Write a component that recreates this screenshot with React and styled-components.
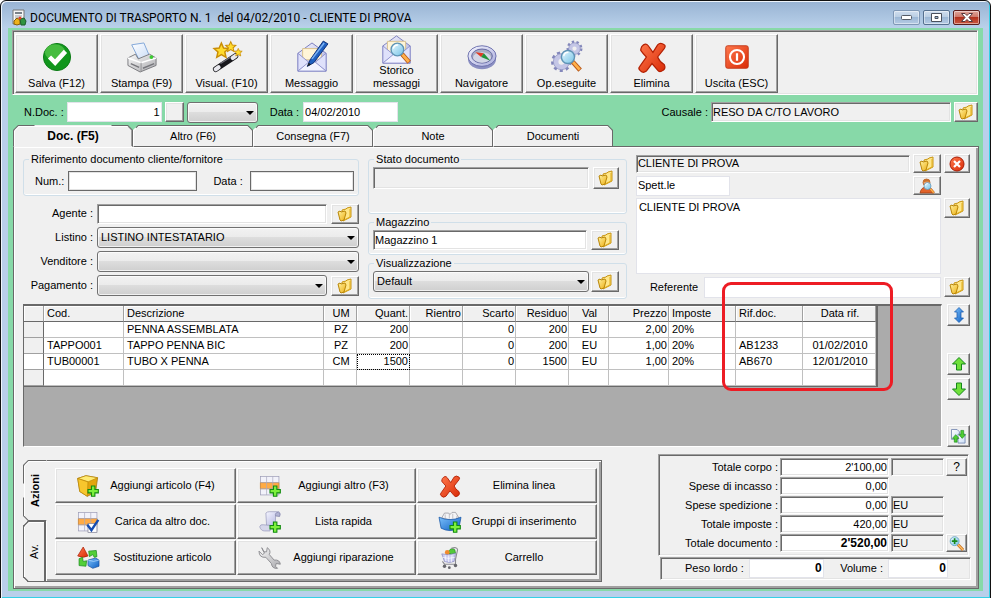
import React, { useId } from "react";
import styled, { createGlobalStyle, css } from "styled-components";

const c = {
  face: "#f0f0f0",
  green: "#87d9a8",
  frame: "#b9cfea",
  dark: "#696969",
  mid: "#a0a0a0",
  light: "#e3e3e3",
};

const GlobalStyle = createGlobalStyle`
  * { box-sizing: border-box; }
  body { margin: 0; background: #fff; color: #000; font: 11px/13px "Liberation Sans", Arial, sans-serif; }
  button, input, select, textarea { font: inherit; color: inherit; margin: 0; border-radius: 0; }
`;

/* ---------- Shared looks ---------- */

const raised = css`
  border: 1px solid;
  border-color: #fff ${c.dark} ${c.dark} #fff;
  box-shadow: inset -1px -1px ${c.mid}, inset 1px 1px ${c.light};
  background: ${c.face};
  padding: 0;
`;

const sunken = css`
  border: 1px solid;
  border-color: ${c.mid} #fff #fff ${c.mid};
  box-shadow: inset 1px 1px ${c.dark}, inset -1px -1px ${c.light};
`;

const fieldLooks = {
  sunken,
  boxed: css`border: 1px solid ${c.dark}; box-shadow: inset 0 0 0 1px ${c.light};`,
  soft: css`border: 1px solid #e2e3ea;`,
};

/* ---------- Window ---------- */

const Window = styled.main`
  display: flex;
  flex-direction: column;
  min-height: 100vh;
  padding: 0 7px 7px;
  border: 1px solid #111;
  border-radius: 6px 6px 0 0;
  background: linear-gradient(#98b3d3, #b9d1ea 27px, ${c.frame} 28px);
  box-shadow: inset 1px 1px #eef4fb, inset -1px -1px #35d0e6;
`;

const TitleBar = styled.header`
  display: flex;
  align-items: center;
  height: 27px;
  padding: 6px 3px 0 4px;
  gap: 4px;
`;

const Title = styled.h1`
  flex: 1;
  margin: 0;
  font: 12px/16px Roboto, "Open Sans", sans-serif;
  white-space: pre;
`;

const CaptionButtons = styled.div`
  display: flex;
  gap: 3px;
`;

const CaptionButton = styled.button`
  display: flex;
  align-items: center;
  justify-content: center;
  width: 27px;
  height: 15px;
  padding: 0;
  border: 1px solid ${(p) => (p.$close ? "#5a1d1d" : p.$quiet ? "#7f97b5" : "#56708f")};
  border-radius: 2px;
  background: ${(p) =>
    p.$close
      ? "linear-gradient(#dfa59b, #cd7668 48%, #b3321f 50%, #c9573f)"
      : "linear-gradient(#d0deee, #b9cde3 48%, #9db8d6 50%, #b5cbe4)"};
  box-shadow: inset 0 0 0 1px rgba(255, 255, 255, 0.45);
`;

const Client = styled.div`
  display: flex;
  flex: 1;
  flex-direction: column;
  padding: 2px 5px 2px 4px;
  background: ${c.green};
`;

/* ---------- Toolbar ---------- */

const Toolbar = styled.nav`
  display: flex;
  gap: 2px;
  height: 65px;
  padding: 3px 2px 2px;
  background: ${c.face};
  ${sunken}
`;

const ToolButton = styled.button`
  ${raised}
  display: flex;
  flex-direction: column;
  align-items: center;
  justify-content: flex-end;
  gap: ${(p) => (p.$tall ? 0 : 5)}px;
  flex: 0 1 83px;
  height: 59px;
  padding-bottom: 2px;
  white-space: pre-line;
`;

const DocRow = styled.div`
  display: flex;
  align-items: center;
  height: 20px;
  margin: 7px 0 3px;
  padding-left: 12px;
`;

const Group = styled.div`
  display: flex;
  align-items: center;
  flex: ${(p) => p.$flex || "none"};
  gap: ${(p) => p.$gap ?? 4}px;
  min-width: 0;
  margin-left: ${(p) => (p.$push ? "auto" : 0)};
  padding-left: ${(p) => p.$indent || 0}px;
`;

const Label = styled.label`
  white-space: nowrap;
  text-align: ${(p) => (p.$right ? "right" : "left")};
`;

const Input = styled.input`
  ${(p) => fieldLooks[p.$look || "sunken"]}
  flex: ${(p) => (p.$w ? `0 1 ${p.$w}px` : "1 1 0")};
  width: ${(p) => (p.$w ? `${p.$w}px` : "100%")};
  min-width: 0;
  height: ${(p) => p.$h || 20}px;
  padding: 0 1px 1px;
  background: ${(p) => (p.readOnly ? c.face : "#fff")};
  text-align: ${(p) => (p.$right ? "right" : "left")};
  font-weight: ${(p) => (p.$bold ? 700 : 400)};
  font-size: ${(p) => (p.$bold ? 12 : 11)}px;
`;

const SelectBox = styled.span`
  position: relative;
  display: flex;
  flex: ${(p) => (p.$w ? `0 1 ${p.$w}px` : "1 1 0")};
  width: ${(p) => (p.$w ? `${p.$w}px` : "auto")};
  min-width: 0;
  &::after {
    content: "";
    position: absolute;
    right: 4px;
    top: 9px;
    border: 4px solid transparent;
    border-top-color: #000;
    border-bottom: 0;
    pointer-events: none;
  }
`;

const NativeSelect = styled.select`
  appearance: none;
  width: 100%;
  height: 21px;
  padding: 0 16px 0 3px;
  border: 1px solid #707070;
  border-radius: 3px;
  background: linear-gradient(#f2f2f2, #ebebeb 49%, #dddddd 50%, #cfcfcf);
  box-shadow: inset 0 0 0 1px rgba(255, 255, 255, 0.7);
`;

const SmallButton = styled.button`
  ${raised}
  display: flex;
  flex: none;
  align-items: center;
  justify-content: center;
  width: ${(p) => p.$w || 28}px;
  height: ${(p) => p.$h || 20}px;
  font-size: 12px;
`;

/* ---------- Tabs and page ---------- */

const Tabs = styled.div`
  display: flex;
  margin: 0 1px -1px;
`;

const Tab = styled.button`
  flex: 0 1 120px;
  height: 22px;
  padding: 0;
  border: 1px solid ${c.dark};
  border-left-color: ${(p) => (p.$active ? c.dark : "#fff")};
  border-bottom-color: ${(p) => (p.$active ? c.face : c.dark)};
  border-radius: 5px 5px 0 0;
  corner-shape: bevel;
  background: ${c.face};
  box-shadow: ${(p) => (p.$active ? `inset 1px 1px #fff, inset -1px 0 ${c.mid}` : "inset 0 1px #fff")};
  font-size: ${(p) => (p.$active ? 12 : 11)}px;
  font-weight: ${(p) => (p.$active ? 700 : 400)};
  z-index: ${(p) => (p.$active ? 1 : 0)};
`;

const Page = styled.section`
  display: flex;
  flex: 1;
  flex-direction: column;
  margin: 0 -1px 0 1px;
  padding: 6px 6px 6px 9px;
  border: 1px solid ${c.dark};
  background: ${c.face};
  box-shadow: inset 1px 1px #fff, inset -2px -2px ${c.mid};
`;

const FormGrid = styled.div`
  display: grid;
  grid-template-columns: 335fr 258fr 333fr;
  column-gap: 9px;
  padding: 0 2px 0 0;
`;

const Column = styled.div`
  display: flex;
  flex-direction: column;
  gap: ${(p) => p.$gap || 2}px;
  min-width: 0;
`;

const Fieldset = styled.fieldset`
  display: flex;
  align-items: flex-start;
  gap: ${(p) => p.$gap || 4}px;
  min-width: 0;
  height: ${(p) => p.$h}px;
  margin: 0;
  padding: ${(p) => p.$top || 1}px ${(p) => p.$side || 7}px 0 4px;
  border: 1px solid #d0dfe9;
  border-radius: 3px;
  box-shadow: inset 0 -1px #fff;
`;

const Legend = styled.legend`
  height: 13px;
  margin-left: 1px;
  padding: 0 2px;
`;

const FieldRows = styled.div`
  display: grid;
  grid-template-columns: 70px 1fr;
  grid-auto-rows: 21px;
  align-items: center;
  gap: 3px 4px;
  margin-top: 5px;
`;

const AddressGrid = styled.div`
  display: grid;
  grid-template-columns: minmax(0, 1fr) 26px;
  grid-template-rows: 19px 19px 76px 21px;
  gap: 3px;
  padding-top: 1px;
`;

const AddressArea = styled.textarea`
  ${fieldLooks.soft}
  resize: none;
  width: 100%;
  height: 76px;
  padding: 2px;
  background: #fff;
`;

/* ---------- Document lines ---------- */

const Lines = styled.div`
  display: flex;
  flex: 1;
  gap: 5px;
  min-height: 143px;
  margin: 5px 2px 0 0;
`;

const TableArea = styled.div`
  position: relative;
  flex: 1;
  min-width: 0;
  background: #ababab;
  border: 1px solid;
  border-color: ${c.dark} #fff #fff ${c.dark};
  border-top-width: 2px;
`;

const Table = styled.table`
  table-layout: fixed;
  width: 854px;
  border-collapse: separate;
  border-spacing: 0;
  border-right: 2px solid ${c.dark};
  border-bottom: 1px solid ${c.dark};
`;

const Cell = styled.td`
  height: 16px;
  padding: 0 1px 0 3px;
  border-right: 1px solid #c0c0c0;
  border-bottom: 1px solid #c0c0c0;
  background: #fff;
  line-height: 13px;
  white-space: nowrap;
  text-align: ${(p) => p.$align || "left"};
  ${(p) => p.$focused && "outline: 1px dotted #000; outline-offset: -1px;"}
`;

const HeadCell = styled(Cell).attrs({ as: "th", scope: "col" })`
  font-weight: 400;
  background: ${c.face};
  border-right-color: ${c.mid};
  border-bottom-color: ${c.dark};
  box-shadow: inset 1px 1px #fff;
`;

const RowHead = styled(Cell)`
  background: ${(p) => (p.$current ? "#fff" : c.face)};
  border-right-color: ${c.dark};
  border-bottom-color: ${c.mid};
`;

const Highlight = styled.div`
  position: absolute;
  top: -24px;
  left: 698px;
  width: 171px;
  height: 109px;
  border: 3px solid #ed1c24;
  border-radius: 9px;
  pointer-events: none;
`;

const SideButtons = styled.div`
  display: flex;
  flex-direction: column;
  gap: 3px;
  & > :nth-child(2) { margin-top: 24px; }
  & > :last-child { margin-top: auto; }
`;

/* ---------- Bottom area ---------- */

const Bottom = styled.div`
  display: flex;
  justify-content: space-between;
  gap: 20px;
  margin-top: 7px;
`;

const Actions = styled.div`
  display: flex;
  flex: 0 1 579px;
  margin-top: 6px;
`;

const SideTabs = styled.div`
  display: flex;
  flex-direction: column;
  width: 23px;
  margin-right: -1px;
`;

const SideTab = styled.button`
  flex: 1;
  width: ${(p) => (p.$active ? 24 : 22)}px;
  padding: 0;
  writing-mode: vertical-rl;
  transform: rotate(180deg);
  border: 1px solid ${c.dark};
  border-left: ${(p) => (p.$active ? `1px solid ${c.face}` : `1px solid ${c.dark}`)};
  border-radius: 0 5px 5px 0;
  corner-shape: bevel;
  background: ${c.face};
  box-shadow: inset -1px -1px #fff;
  font-weight: ${(p) => (p.$active ? 700 : 400)};
  z-index: ${(p) => (p.$active ? 1 : 0)};
`;

const ActionGrid = styled.div`
  display: grid;
  flex: 1;
  grid-template-columns: 181fr 179fr 180fr;
  grid-auto-rows: 35px;
  gap: 1px;
  padding: 7px 4px 6px 9px;
  border: 1px solid ${c.dark};
  box-shadow: inset 0 1px #fff, inset 1px 0 #fff, inset -2px -2px ${c.mid};
`;

const ActionButton = styled.button`
  ${raised}
  display: flex;
  align-items: center;
  padding: 0 9px 0 21px;
  span { flex: 1; }
`;

const Summary = styled.div`
  display: flex;
  flex-direction: column;
  gap: 1px;
  flex: 0 1 311px;
  margin-right: 3px;
`;

const Totals = styled.div`
  ${sunken}
  display: grid;
  grid-template-columns: 1fr 109px 53px 22px;
  grid-auto-rows: 18px;
  align-items: center;
  gap: 1px 2px;
  padding: 3px 0 3px 2px;
  height: 102px;
`;

const Weights = styled.div`
  ${sunken}
  display: flex;
  align-items: center;
  gap: 5px;
  height: 23px;
  margin: 0 -2px 0 2px;
  padding: 0 22px 0 24px;
`;

const VolumeLabel = styled(Label)`
  margin-left: auto;
`;

/* ---------- Icons ---------- */

const Svg = styled.svg`
  display: block;
  flex: none;
  overflow: visible;
`;

const Icon = ({ size = 30, children }) => (
  <Svg width={size} height={size} viewBox="0 0 32 32" aria-hidden="true">{children}</Svg>
);

const Gradients = () => (
  <Svg width="0" height="0" aria-hidden="true">
    <defs>
      {[
        ["gGreen", "#7be36a", "#0a8a16"],
        ["gRed", "#ff7a4e", "#d92a06"],
        ["gYellow", "#fff2a0", "#edae12"],
        ["gLilac", "#f6f6ff", "#a9acdc"],
        ["gBlue", "#7cc0fa", "#0d5fc4"],
        ["gLens", "#eafaff", "#74c2e6"],
        ["gGrey", "#fafafa", "#a8a8ac"],
        ["gPale", "#ffffff", "#c9dcf7"],
      ].map(([id, a, b]) => (
        <linearGradient id={id} key={id} x1="0" y1="0" x2="1" y2="1">
          <stop offset="0" stopColor={a} />
          <stop offset="1" stopColor={b} />
        </linearGradient>
      ))}
    </defs>
  </Svg>
);

const Plus = () => (
  <path d="M21 16h5v5h5v5h-5v5h-5v-5h-5v-5h5z" fill="#7df03c" stroke="#128a10" strokeWidth="1.6" />
);

const Lens = () => (
  <g>
    <path d="M22 21l8 9" stroke="#b9591a" strokeWidth="5" />
    <path d="M22.500 21.500l7 8" stroke="#ffb04a" strokeWidth="3" />
    <circle cx="17" cy="16" r="7" fill="url(#gLens)" stroke="#5e93b5" strokeWidth="1.500" />
    <path d="M12.500 15a5 5 0 0 1 5-4" stroke="#fff" strokeWidth="1.500" fill="none" />
  </g>
);

const SaveIcon = () => (
  <Icon>
    <circle cx="16" cy="16" r="14.500" fill="#11961d" stroke="#0b7a14" />
    <ellipse cx="14" cy="11" rx="11" ry="8.500" fill="#5ccc50" opacity="0.7" />
    <path d="M8 16l6 6L25 10" fill="none" stroke="#fff" strokeWidth="4.800" />
  </Icon>
);

const PrinterIcon = () => (
  <Icon>
    <path d="M5 3l13-2 6 14-11 4z" fill="url(#gPale)" stroke="#7ea4d8" />
    <path d="M1 17l8-4 3 5 12-5 7 4v8l-17 7L1 25z" fill="url(#gGrey)" stroke="#77777c" />
    <path d="M1 17l14 5 16-5" fill="none" stroke="#fff" strokeWidth="1.600" />
    <path d="M15 22v9" stroke="#8e8e92" />
    <path d="M4 23l9 4M17 28l12-5" stroke="#77777c" strokeWidth="1.500" />
    <circle cx="26" cy="16" r="2" fill="#3ccd32" />
  </Icon>
);

const STAR = "M0-6l1.800 4 4.200.4-3.200 2.900 1 4.300L0 3.400-3.800 5.600l1-4.300L-6-1.600l4.200-.4z";

const WandIcon = () => (
  <Icon>
    <path d="M4 29L25 15" stroke="#17171b" strokeWidth="6" strokeLinecap="round" />
    <path d="M4 29l3-2M22 17l3-2" stroke="#e8e8ee" strokeWidth="4.500" strokeLinecap="round" />
    <path d="M9 23l11-7" stroke="#73737c" strokeWidth="1.300" />
    {[[10, 9, 1.3], [20, 5, 0.9], [28, 11, 0.7]].map(([x, y, s]) => (
      <path key={x} d={STAR} transform={`translate(${x} ${y}) scale(${s})`} fill="#ffdc2e" stroke="#c98d06" strokeWidth="1.200" />
    ))}
  </Icon>
);

const Envelope = () => (
  <g>
    <path d="M1 12L16 1l15 11v19H1z" fill="url(#gLilac)" stroke="#7478bb" />
    <path d="M6 7h20v12H6z" fill="#fff5d8" stroke="#d7c08c" />
    <path d="M1 12l12 10L1 31zM31 12L19 22l12 9z" fill="#dfe1fb" stroke="#8d90cc" />
    <path d="M1 31l12-10q3-2 6 0l12 10z" fill="#f2f3ff" stroke="#8d90cc" />
  </g>
);

const MessageIcon = () => (
  <Icon>
    <Envelope />
    <path d="M11 26l3-7L28-1l5 3-15 20z" fill="#1f60c0" stroke="#0f2f75" />
    <path d="M16 18L29 1" stroke="#7db2f2" strokeWidth="1.600" />
    <path d="M11 26l1.500-4 2.500 2z" fill="#222" />
  </Icon>
);

const HistoryIcon = () => (
  <Icon size={29}>
    <Envelope />
    <Lens />
  </Icon>
);

const CompassIcon = () => (
  <Icon>
    <ellipse cx="16" cy="18" rx="15" ry="11" fill="#8b8fc2" />
    <ellipse cx="16" cy="15" rx="15" ry="11" fill="url(#gLilac)" stroke="#696dab" />
    <ellipse cx="16" cy="15" rx="11" ry="7.500" fill="#a9adc4" stroke="#5f639f" />
    <ellipse cx="16" cy="16.500" rx="9.500" ry="5.500" fill="#d3d6e6" />
    <path d="M9 11l9 1-3 4z" fill="#e33a22" />
    <path d="M25 20l-10-4 3-4z" fill="#23933a" />
  </Icon>
);

const Gear = ({ x, y, r }) => (
  <g transform={`translate(${x} ${y})`}>
    <circle r={r} fill="none" stroke="#8286ba" strokeWidth="4" strokeDasharray={`${(r * Math.PI) / 9} ${(r * Math.PI) / 9}`} />
    <circle r={r * 0.65} fill="none" stroke="#c4c6e6" strokeWidth={r * 0.6} />
    <circle r={r * 0.95} fill="none" stroke="#9195c4" strokeWidth="0.800" />
  </g>
);

const GearsIcon = () => (
  <Icon>
    <Gear x={24} y={7} r={6.5} />
    <Gear x={10} y={21} r={9} />
    <Lens />
  </Icon>
);

const CrossIcon = ({ size }) => (
  <Icon size={size}>
    <path
      d="M5 5q4-5 7-1l5 7 5-8q3-3 7 0 2 1 0 4l-7 9q2 5 7 8 2 4-1 6-4 3-6 0l-6-7-6 8q-4 3-7-1-2-2 0-4l7-10q-4-4-6-7 0-2 1-4z"
      fill="url(#gRed)"
      stroke="#b32003"
      strokeWidth="1.300"
    />
  </Icon>
);

const PowerIcon = () => (
  <Icon>
    <rect x="4" y="4" width="24" height="24" rx="2" fill="url(#gRed)" stroke="#c23a1a" />
    <circle cx="16" cy="16" r="7.500" fill="none" stroke="#fff" strokeWidth="2.200" />
    <path d="M16 12v8" stroke="#fff" strokeWidth="2.400" />
  </Icon>
);

const FolderIcon = () => (
  <Svg width="16" height="16" viewBox="0 0 16 16" aria-hidden="true">
    <path d="M5 4l4-1 1-1 4-1v10l-8 4z" fill="#ffe78a" stroke="#c79412" />
    <path d="M13 3v8l-6 3" fill="none" stroke="#e0ac1c" />
    <path d="M1 6l2-1 1 1 4-1 1 2-2 7-3 1-1-1z" fill="url(#gYellow)" stroke="#b98608" />
  </Svg>
);

const RemoveIcon = () => (
  <Icon size={16}>
    <circle cx="16" cy="16" r="14" fill="url(#gRed)" stroke="#a81c05" strokeWidth="2" />
    <path d="M10 10l12 12M22 10L10 22" stroke="#fff" strokeWidth="4.500" />
  </Icon>
);

const PersonIcon = () => (
  <Icon size={16}>
    <path d="M2 30q2-12 13-12t14 12z" fill="#e2622a" stroke="#9c3c10" strokeWidth="1.500" />
    <circle cx="15" cy="9" r="7" fill="#f4a56b" stroke="#a75624" strokeWidth="1.500" />
    <path d="M8 9q0-8 8-7 6 0 6 6-6-2-14 1z" fill="#c8702c" />
    <Lens />
  </Icon>
);

const ArrowIcon = ({ kind }) => (
  <Icon size={16}>
    {kind === "both" && <path d="M16 1l9 9h-5v12h5l-9 9-9-9h5V10H7z" fill="url(#gBlue)" stroke="#1659ad" strokeWidth="1.500" />}
    {kind === "up" && <path d="M16 3l13 13h-8v12H11V16H3z" fill="#6fe03a" stroke="#14861a" strokeWidth="2" />}
    {kind === "down" && <path d="M16 29L3 16h8V4h10v12h8z" fill="#6fe03a" stroke="#14861a" strokeWidth="2" />}
  </Icon>
);

const SwapIcon = () => (
  <Icon size={15}>
    <path d="M1 1h12l5 5v16H1z" fill="url(#gPale)" stroke="#7185b0" strokeWidth="1.800" />
    <path d="M15 11h15v19H15z" fill="url(#gPale)" stroke="#7185b0" strokeWidth="1.800" />
    <path d="M10 12l7 8h-4v8H7v-8H3zM24 20l-7-8h4V3h6v9h4z" fill="#4fcf31" stroke="#14861a" strokeWidth="1.300" />
  </Icon>
);

const BoxIcon = () => (
  <Icon size={22}>
    <path d="M1 5L13 1l17 3-3 21-12 6L4 24z" fill="#e2a50e" stroke="#9c6d04" />
    <path d="M1 5l15 5 14-6-17-3z" fill="#ffeb74" stroke="#b98608" />
    <path d="M16 10l-1 21L4 24 1 5z" fill="#f7c62d" stroke="#b98608" />
    <Plus />
  </Icon>
);

const SheetGrid = () => (
  <g>
    <rect x="2" y="2" width="27" height="27" fill="#f2f2fa" stroke="#9a9ab4" />
    <path d="M2 11h27v9H2z" fill="#ffab45" stroke="#c8812e" />
    <path d="M2 11h27M2 20h27M11 2v27M20 2v27" stroke="#aaaabf" fill="none" />
  </g>
);

const SheetAddIcon = () => (
  <Icon size={22}><SheetGrid /><Plus /></Icon>
);

const SheetCheckIcon = () => (
  <Icon size={22}>
    <SheetGrid />
    <rect x="16" y="18" width="13" height="13" fill="#fff" stroke="#7c7c90" />
    <path d="M15 20l6 8 10-15" fill="none" stroke="#154cb0" strokeWidth="3.500" />
  </Icon>
);

const ScrollIcon = () => (
  <Icon size={22}>
    <path d="M10 3q2-2 5-2h14q3 2 1 6h-6v15H11z" fill="url(#gLilac)" stroke="#9698ba" />
    <path d="M24 7q-1-5 4-5 4 2 2 6z" fill="#b2b4d4" stroke="#8082a8" />
    <path d="M1 23q1-4 5-3l12 1-2 8H8q-5 0-7-6z" fill="#d5d6ea" stroke="#9698ba" />
    <Plus />
  </Icon>
);

const ShapesIcon = () => (
  <Icon size={22}>
    <path d="M9 0l7 13q-7 4-15 0z" fill="url(#gRed)" stroke="#a81c05" />
    <path d="M16 19l11-3 5 3v9l-9 3-7-4z" fill="url(#gBlue)" stroke="#194d9a" />
    <path d="M16 19l8 2 8-2" fill="none" stroke="#b8dcff" />
    <path d="M3 17l5-2 1 6 5-1-1 8-10-1zM17 6l11-1 1 9-4 1-2-4-5 3z" fill="#53cf38" stroke="#14861a" />
  </Icon>
);

const WrenchIcon = () => (
  <Icon size={22}>
    <path
      d="M4 1l3 6 4 0 1-6q6 4 3 10l7 8q8-1 9 6l-6-1-1 4 3 3q-8 1-9-7l-8-9Q0 16 0 6l5 5 3-2z"
      fill="url(#gGrey)"
      stroke="#88888c"
      strokeWidth="1.300"
    />
  </Icon>
);

const BasketIcon = () => (
  <Icon size={22}>
    <path d="M4 10l4-7h6l2 2 3-3h5l5 8-10 4z" fill="#f4f4f6" stroke="#8d8d94" />
    <path d="M9 5v6M15 4v7M20 4v7M26 7v5" stroke="#a9a9b0" />
    <path d="M0 9q16 7 32 0l-3 16q-13 7-26 0z" fill="url(#gBlue)" stroke="#0c4da2" />
    <Plus />
  </Icon>
);

const CartIcon = () => (
  <Icon size={22}>
    <path d="M14 6q4-6 9-2l1 5q-6 3-11 0z" fill="#52c93a" stroke="#1d8a1c" />
    <circle cx="12" cy="8" r="3.500" fill="#f18a2e" />
    <path d="M4 10q10 3 20-1l-2 12q-7 3-14 0z" fill="#cccdf2" stroke="#8183ba" />
    <path d="M9 12l1 9M14 12v10M19 11l-1 11M5 15q9 3 18 0" stroke="#fff" fill="none" />
    <path d="M18 2q8-3 9 2l-3 14v7H8l-3-4" fill="none" stroke="#8a8a90" strokeWidth="1.600" />
    <circle cx="8" cy="28" r="2.500" fill="#66666c" />
    <circle cx="15" cy="30" r="2" fill="#66666c" />
    <circle cx="24" cy="27" r="2.500" fill="#66666c" />
  </Icon>
);

const ZoomIcon = () => (
  <Icon size={15}>
    <path d="M19 18l11 12" stroke="#c46b1c" strokeWidth="6" />
    <path d="M19 18l11 12" stroke="#ffbd62" strokeWidth="3" />
    <circle cx="12" cy="11" r="9.500" fill="url(#gLens)" stroke="#6aa6c8" strokeWidth="2" />
    <path d="M12 5v12M6 11h12" stroke="#168a1c" strokeWidth="3.500" />
  </Icon>
);

const DocumentIcon = () => (
  <Svg width="14" height="17" viewBox="0 0 14 17" aria-hidden="true">
    <path d="M1 1h11v14H1z" fill="#f6f6f6" stroke="#777" />
    <path d="M3 3h7v2H3z" fill="#7b8288" />
    <path d="M3 7h7M3 9h5" stroke="#9aa0a6" />
    <path d="M2 12l3-3 3 2v4l-3 1-3-1z" fill="#efb21a" stroke="#8a5e06" />
    <path d="M8 10l4-1 2 3-1 4H9z" fill="#2e9440" stroke="#1b5f28" />
    <circle cx="8" cy="9" r="1.500" fill="#e0402a" />
  </Svg>
);

/* ---------- Small composites ---------- */

const Select = ({ id, value = "", w, label }) => (
  <SelectBox $w={w}>
    <NativeSelect id={id} defaultValue={value} aria-label={label}>
      <option value={value}>{value}</option>
    </NativeSelect>
  </SelectBox>
);

const FolderButton = ({ label, w, h }) => (
  <SmallButton type="button" $w={w} $h={h} aria-label={label}><FolderIcon /></SmallButton>
);

const TotalRow = ({ label, value, unit, bold, children }) => {
  const id = useId();
  return (
    <>
      <Label htmlFor={id} $right>{label}</Label>
      <Input id={id} defaultValue={value} $right $bold={bold} $h={18} />
      {unit === undefined ? <span /> : <Input aria-label={`${label} valuta`} defaultValue={unit} readOnly $h={18} />}
      {children || <span />}
    </>
  );
};

/* ---------- Data ---------- */

const tools = [
  ["Salva (F12)", SaveIcon],
  ["Stampa (F9)", PrinterIcon],
  ["Visual. (F10)", WandIcon],
  ["Messaggio", MessageIcon],
  ["Storico\nmessaggi", HistoryIcon],
  ["Navigatore", CompassIcon],
  ["Op.eseguite", GearsIcon],
  ["Elimina", CrossIcon],
  ["Uscita (ESC)", PowerIcon],
];

const tabs = ["Doc. (F5)", "Altro (F6)", "Consegna (F7)", "Note", "Documenti"];

const columns = [
  ["Cod.", 80],
  ["Descrizione", 200],
  ["UM", 33, "center"],
  ["Quant.", 53, "right"],
  ["Rientro", 53, "right"],
  ["Scarto", 53, "right"],
  ["Residuo", 53, "right"],
  ["Val", 40, "center"],
  ["Prezzo", 60, "right"],
  ["Imposte", 67],
  ["Rif.doc.", 67],
  ["Data rif.", 73, "center"],
];

const rows = [
  ["", "PENNA ASSEMBLATA", "PZ", "200", "", "0", "200", "EU", "2,00", "20%", "", ""],
  ["TAPPO001", "TAPPO PENNA BIC", "PZ", "200", "", "0", "200", "EU", "1,00", "20%", "AB1233", "01/02/2010"],
  ["TUB00001", "TUBO X PENNA", "CM", "1500", "", "0", "1500", "EU", "1,00", "20%", "AB670", "12/01/2010"],
  Array(12).fill(""),
];

const actions = [
  ["Aggiungi articolo (F4)", BoxIcon],
  ["Aggiungi altro (F3)", SheetAddIcon],
  ["Elimina linea", () => <CrossIcon size={22} />],
  ["Carica da altro doc.", SheetCheckIcon],
  ["Lista rapida", ScrollIcon],
  ["Gruppi di inserimento", BasketIcon],
  ["Sostituzione articolo", ShapesIcon],
  ["Aggiungi riparazione", WrenchIcon],
  ["Carrello", CartIcon],
];

export default function App() {
  return (
    <Window>
      <GlobalStyle />
      <Gradients />
      <TitleBar>
        <DocumentIcon />
        <Title>{"DOCUMENTO DI TRASPORTO N. 1  del 04/02/2010 - CLIENTE DI PROVA"}</Title>
        <CaptionButtons>
          <CaptionButton type="button" $quiet aria-label="Riduci a icona">
            <Svg width="11" height="5"><rect x="0.500" y="0.500" width="10" height="4" rx="1" fill="#fff" stroke="#555b66" /></Svg>
          </CaptionButton>
          <CaptionButton type="button" aria-label="Ingrandisci">
            <Svg width="11" height="9">
              <path d="M.5.5h10v8H.5zM4 3.500h3v2H4z" fill="#fff" fillRule="evenodd" stroke="#4a505c" />
            </Svg>
          </CaptionButton>
          <CaptionButton type="button" $close aria-label="Chiudi">
            <Svg width="12" height="9">
              <path d="M.5.5h3.500l2 2 2-2h3.500L8 4.500l3.500 4H8l-2-2-2 2H.5L4 4.500z" fill="#fff" stroke="#55383c" />
            </Svg>
          </CaptionButton>
        </CaptionButtons>
      </TitleBar>

      <Client>
        <Toolbar>
          {tools.map(([label, Glyph]) => (
            <ToolButton type="button" key={label} $tall={label.includes("\n")}>
              <Glyph />
              <span>{label}</span>
            </ToolButton>
          ))}
        </Toolbar>

        <DocRow>
          <Group $gap={3}>
            <Label htmlFor="ndoc">N.Doc. :</Label>
            <Input id="ndoc" defaultValue="1" $look="soft" $right $w={95} />
            <SmallButton type="button" $w={19} aria-label="Numerazione" />
            <Select w={71} label="Serie" />
          </Group>
          <Group $flex="1 1 0" $indent={12}>
            <Label htmlFor="data">Data :</Label>
            <Input id="data" defaultValue="04/02/2010" $look="soft" $w={95} />
          </Group>
          <Group $push $gap={3}>
            <Label htmlFor="causale">Causale :</Label>
            <Input id="causale" defaultValue="RESO DA C/TO LAVORO" readOnly $w={240} />
            <FolderButton label="Scegli causale" w={24} />
          </Group>
        </DocRow>

        <Tabs role="tablist">
          {tabs.map((t, i) => (
            <Tab type="button" role="tab" aria-selected={i === 0} key={t} $active={i === 0}>{t}</Tab>
          ))}
        </Tabs>

        <Page>
          <FormGrid>
            <Column>
              <Fieldset $h={43} $top={5} $side={4}>
                <Legend>Riferimento documento cliente/fornitore</Legend>
                <Group $flex="172 1 0" $indent={7}>
                  <Label htmlFor="num">Num.:</Label>
                  <Input id="num" $look="boxed" />
                </Group>
                <Group $flex="149 1 0" $gap={7} $indent={12}>
                  <Label htmlFor="rifdata">Data :</Label>
                  <Input id="rifdata" $look="boxed" />
                </Group>
              </Fieldset>
              <FieldRows>
                <Label htmlFor="agente" $right>Agente :</Label>
                <Group><Input id="agente" /><FolderButton label="Scegli agente" /></Group>
                <Label htmlFor="listino" $right>Listino :</Label>
                <Select id="listino" value="LISTINO INTESTATARIO" />
                <Label htmlFor="venditore" $right>Venditore :</Label>
                <Select id="venditore" />
                <Label htmlFor="pagamento" $right>Pagamento :</Label>
                <Group><Select id="pagamento" /><FolderButton label="Scegli pagamento" /></Group>
              </FieldRows>
            </Column>

            <Column>
              <Fieldset $h={61}>
                <Legend>Stato documento</Legend>
                <Input aria-label="Stato documento" readOnly $h={22} />
                <FolderButton label="Scegli stato" w={26} h={22} />
              </Fieldset>
              <Fieldset $h={39}>
                <Legend>Magazzino</Legend>
                <Input aria-label="Magazzino" defaultValue="Magazzino 1" />
                <FolderButton label="Scegli magazzino" />
              </Fieldset>
              <Fieldset $h={42} $gap={2}>
                <Legend>Visualizzazione</Legend>
                <Select label="Visualizzazione" value="Default" />
                <FolderButton label="Scegli visualizzazione" h={21} />
              </Fieldset>
            </Column>

            <AddressGrid>
              <Group $gap={3}>
                <Input aria-label="Cliente" defaultValue="CLIENTE DI PROVA" readOnly $h={18} />
                <FolderButton label="Scegli cliente" h={19} />
              </Group>
              <SmallButton type="button" $w={26} $h={19} aria-label="Rimuovi cliente"><RemoveIcon /></SmallButton>
              <Group>
                <Input aria-label="Titolo" defaultValue="Spett.le" $look="soft" $w={94} />
                <Group $push>
                  <SmallButton type="button" $h={19} aria-label="Scheda cliente"><PersonIcon /></SmallButton>
                </Group>
              </Group>
              <span />
              <AddressArea aria-label="Indirizzo" defaultValue="CLIENTE DI PROVA" />
              <FolderButton label="Scegli indirizzo" w={26} />
              <Group $gap={6} $indent={14}>
                <Label htmlFor="referente">Referente</Label>
                <Input id="referente" $look="soft" $h={21} />
              </Group>
              <FolderButton label="Scegli referente" w={26} />
            </AddressGrid>
          </FormGrid>

          <Lines>
            <TableArea>
              <Table>
                <colgroup>
                  <col width="20" />
                  {columns.map(([name, w]) => <col key={name} width={w} />)}
                </colgroup>
                <thead>
                  <tr>
                    <HeadCell />
                    {columns.map(([name, , align]) => <HeadCell key={name} $align={align}>{name}</HeadCell>)}
                  </tr>
                </thead>
                <tbody>
                  {rows.map((row, r) => (
                    <tr key={r}>
                      <RowHead $current={r === 2} />
                      {row.map((value, i) => (
                        <Cell key={i} $align={columns[i][2]} $focused={r === 2 && i === 3}>{value}</Cell>
                      ))}
                    </tr>
                  ))}
                </tbody>
              </Table>
              <Highlight />
            </TableArea>
            <SideButtons>
              <SmallButton type="button" $w={23} $h={22} aria-label="Sposta"><ArrowIcon kind="both" /></SmallButton>
              <SmallButton type="button" $w={23} $h={22} aria-label="Sposta su"><ArrowIcon kind="up" /></SmallButton>
              <SmallButton type="button" $w={23} $h={22} aria-label="Sposta giù"><ArrowIcon kind="down" /></SmallButton>
              <SmallButton type="button" $w={23} $h={22} aria-label="Scambia"><SwapIcon /></SmallButton>
            </SideButtons>
          </Lines>

          <Bottom>
            <Actions>
              <SideTabs role="tablist">
                <SideTab type="button" role="tab" aria-selected $active>Azioni</SideTab>
                <SideTab type="button" role="tab" aria-selected={false}>Av.</SideTab>
              </SideTabs>
              <ActionGrid>
                {actions.map(([label, Glyph]) => (
                  <ActionButton type="button" key={label}>
                    <Glyph />
                    <span>{label}</span>
                  </ActionButton>
                ))}
              </ActionGrid>
            </Actions>

            <Summary>
              <Totals>
                <TotalRow label="Totale corpo :" value="2'100,00" unit="">
                  <SmallButton type="button" $w={21} $h={18} aria-label="Aiuto">?</SmallButton>
                </TotalRow>
                <TotalRow label="Spese di incasso :" value="0,00" />
                <TotalRow label="Spese spedizione :" value="0,00" unit="EU" />
                <TotalRow label="Totale imposte :" value="420,00" unit="EU" />
                <TotalRow label="Totale documento :" value="2'520,00" unit="EU" bold>
                  <SmallButton type="button" $w={21} $h={18} aria-label="Dettaglio totale"><ZoomIcon /></SmallButton>
                </TotalRow>
              </Totals>
              <Weights>
                <Label htmlFor="peso">Peso lordo :</Label>
                <Input id="peso" defaultValue="0" $look="soft" $right $bold $w={75} $h={19} />
                <VolumeLabel htmlFor="volume">Volume :</VolumeLabel>
                <Input id="volume" defaultValue="0" $look="soft" $right $bold $w={60} $h={19} />
              </Weights>
            </Summary>
          </Bottom>
        </Page>
      </Client>
    </Window>
  );
}
